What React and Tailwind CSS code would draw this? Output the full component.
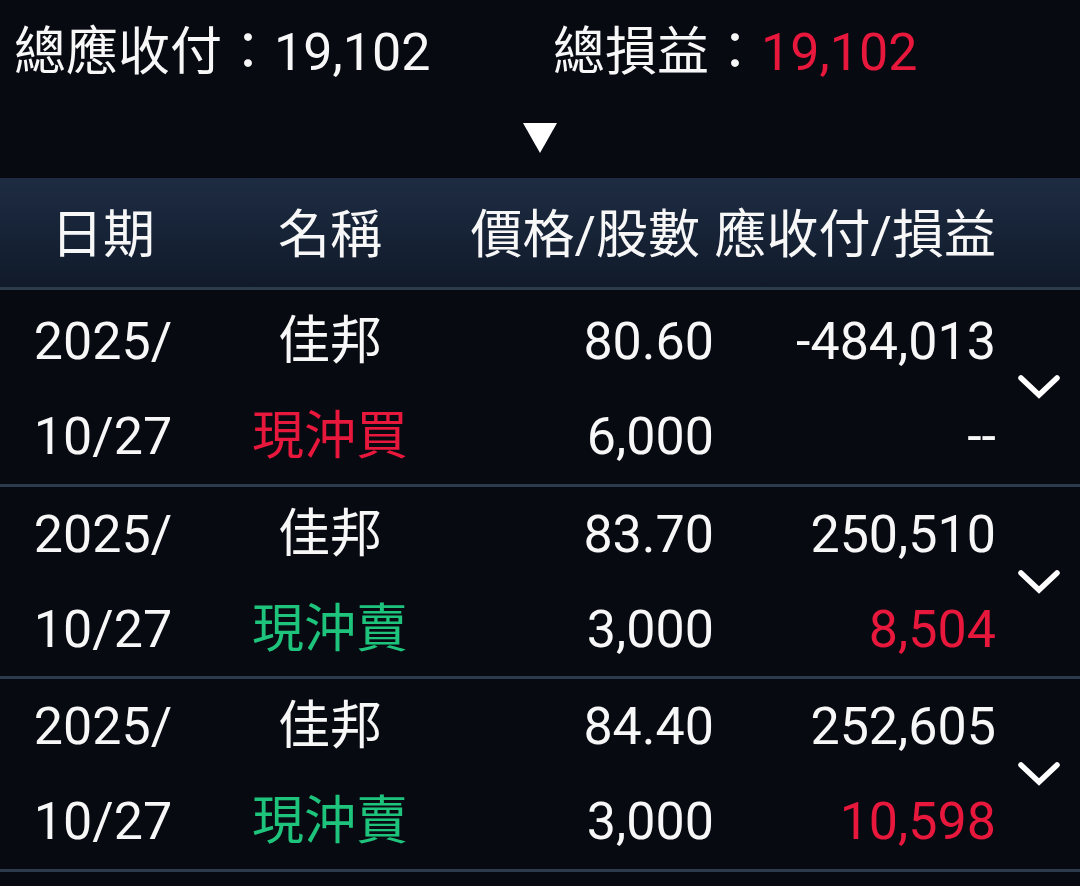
import React from "react";

const RED = "text-[#e8173c]";
const GREEN = "text-[#1fc47c]";

const rows = [
  { h: "h-[197px]", pt: "pt-[3px]", price: "80.60", qty: "6,000", amt: "-484,013", pl: "--", plRed: false, type: "現沖買", typeColor: RED },
  { h: "h-[192px]", pt: "pt-0", price: "83.70", qty: "3,000", amt: "250,510", pl: "8,504", plRed: true, type: "現沖賣", typeColor: GREEN },
  { h: "h-[193px]", pt: "pt-0", price: "84.40", qty: "3,000", amt: "252,605", pl: "10,598", plRed: true, type: "現沖賣", typeColor: GREEN },
];

function Chevron() {
  return (
    <svg width="42" height="26" viewBox="0 0 42 26" fill="none">
      <path d="M3 4 L21 21 L39 4" stroke="#ffffff" strokeWidth="5.5" strokeLinecap="round" strokeLinejoin="miter" />
    </svg>
  );
}

export default function App() {
  return (
    <div
      className="w-[1080px] h-[886px] overflow-hidden bg-[#080a12] text-[#f7f7f7]"
      style={{ fontFamily: "Roboto, 'Noto Sans CJK TC', sans-serif" }}
    >
      {/* Summary */}
      <div className="flex pt-[23px] text-[52px] leading-[60px]">
        <div className="w-[553px] pl-[14px] whitespace-nowrap">
          總應收付：19,102
        </div>
        <div className="whitespace-nowrap">
          總損益：<span className={RED}>19,102</span>
        </div>
      </div>
      <div className="flex justify-center mt-[40px] mb-[25px]">
        <svg width="34" height="30" viewBox="0 0 34 30">
          <path d="M0 0 L34 0 L17 30 Z" fill="#ffffff" />
        </svg>
      </div>

      {/* Header */}
      <div className="grid grid-cols-[206px_248px_260px_282px_84px] h-[112px] pt-[6px] items-center bg-gradient-to-b from-[#1e2c43] to-[#101a2a] border-b-[3px] border-[#2c3c4d] text-[52px] leading-[60px]">
        <div className="text-center">日期</div>
        <div className="text-center">名稱</div>
        <div className="text-right pr-[14px] whitespace-nowrap">價格/股數</div>
        <div className="text-right whitespace-nowrap">應收付/損益</div>
        <div />
      </div>

      {/* Rows */}
      {rows.map((r, i) => (
        <div
          key={i}
          className={`grid grid-cols-[206px_248px_260px_282px_84px] ${r.h} items-center border-b-[3px] border-[#2c3c4d] text-[52px] leading-[95px]`}
        >
          <div className={`text-center ${r.pt}`}>
            <div>2025/</div>
            <div>10/27</div>
          </div>
          <div className={`text-center ${r.pt}`}>
            <div>佳邦</div>
            <div className={r.typeColor}>{r.type}</div>
          </div>
          <div className={`text-right ${r.pt}`}>
            <div>{r.price}</div>
            <div>{r.qty}</div>
          </div>
          <div className={`text-right ${r.pt}`}>
            <div>{r.amt}</div>
            <div className={r.plRed ? RED : ""}>{r.pl}</div>
          </div>
          <div className="flex justify-center pl-[2px]">
            <Chevron />
          </div>
        </div>
      ))}
    </div>
  );
}
